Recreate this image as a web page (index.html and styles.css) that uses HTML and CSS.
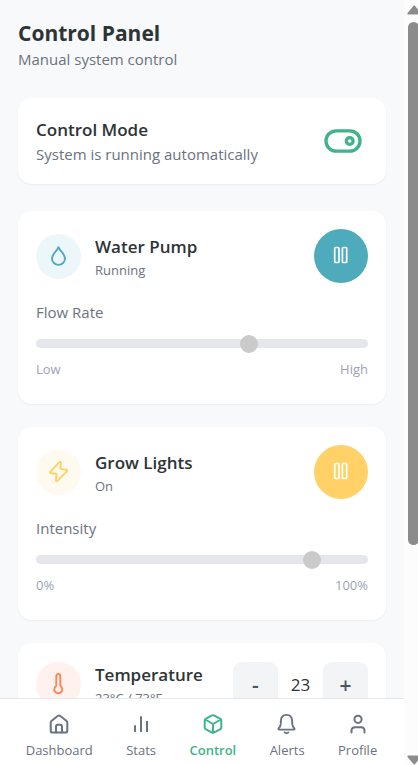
FILE: index.html
```html
<!DOCTYPE html>
<html lang="en">
<head>
<meta charset="utf-8">
<meta name="viewport" content="width=device-width, initial-scale=1">
<title>Control Panel</title>
<link rel="stylesheet" href="styles.css">
</head>
<body>
<div class="app">
  <main class="content">
    <header class="page-header">
      <h1>Control Panel</h1>
      <p class="text">Manual system control</p>
    </header>

    <section class="card mode">
      <div>
        <h2>Control Mode</h2>
        <p class="text">System is running automatically</p>
      </div>
      <button class="toggle" type="button" aria-label="Toggle automatic mode">
        <svg width="40" height="26" viewBox="0 0 40 26" fill="none" stroke="currentColor" stroke-width="3.3"><rect x="3" y="2.8" width="34" height="20.4" rx="10.2"/><circle cx="26.7" cy="13" r="3.4"/></svg>
      </button>
    </section>

    <section class="card device water">
      <div class="row">
        <span class="badge"><svg class="icon thin" viewBox="0 0 24 24"><path d="M11.500 3.200C11 6.400 5 9.100 5 14.600a6.500 6.300 0 0 0 13 0C18 9.100 12 6.400 11.500 3.200z"/></svg></span>
        <div class="info"><h2>Water Pump</h2><p class="status">Running</p></div>
        <button class="power" type="button" aria-label="Pause water pump"><svg class="icon pause" viewBox="0 0 24 24"><rect x="5.700" y="3.500" width="4.300" height="15" rx="1"/><rect x="13.400" y="3.500" width="4.300" height="15" rx="1"/></svg></button>
      </div>
      <label class="text" for="flow">Flow Rate</label>
      <input id="flow" type="range" min="0" max="100" value="65">
      <div class="scale"><span>Low</span><span>High</span></div>
    </section>

    <section class="card device lights">
      <div class="row">
        <span class="badge"><svg class="icon thin" viewBox="0 0 24 24"><path d="M12.200 2.300 3.200 11.800c-.5.700-.2 1.400.6 1.500l5.200.5c.5.100.7.400.6.900l-.8 5.500c-.1 1.100.9 1.400 1.600.7l9.500-9.700c.6-.6.300-1.400-.5-1.500l-5.300-.6c-.6-.1-.8-.4-.7-1l.5-5.200c.1-1-1-1.400-1.700-.6z"/></svg></span>
        <div class="info"><h2>Grow Lights</h2><p class="status">On</p></div>
        <button class="power" type="button" aria-label="Pause grow lights"><svg class="icon pause" viewBox="0 0 24 24"><rect x="5.700" y="3.500" width="4.300" height="15" rx="1"/><rect x="13.400" y="3.500" width="4.300" height="15" rx="1"/></svg></button>
      </div>
      <label class="text" for="intensity">Intensity</label>
      <input id="intensity" type="range" min="0" max="100" value="85">
      <div class="scale"><span>0%</span><span>100%</span></div>
    </section>

    <section class="card device heat">
      <div class="row">
        <span class="badge"><svg class="icon thin" viewBox="0 0 24 24"><path d="M9.300 12.800V3a2 2 0 0 1 4 0v9.800a4 4 0 1 1-4 0z"/></svg></span>
        <div class="info"><h2>Temperature</h2><p class="status">23°C / 73°F</p></div>
        <div class="stepper">
          <button type="button" aria-label="Decrease temperature">-</button>
          <output>23</output>
          <button type="button" aria-label="Increase temperature">+</button>
        </div>
      </div>
    </section>
  </main>

  <div class="scrollbar" aria-hidden="true">
    <svg width="14" height="22" viewBox="0 0 14 22"><path d="M3.500 14.500v-1.500L9 6.500q1-2 2.500 0L17 13v1.500z"/></svg>
    <span class="thumb"></span>
    <span class="rest"></span>
    <svg width="14" height="10" viewBox="0 0 14 10"><path d="M3.500 .5V2L9 8.500q1 2 2.500 0L17 2V.5z"/></svg>
  </div>

  <nav class="tabs">
    <a href="#dashboard"><svg class="icon" viewBox="0 0 24 24"><path d="M3.700 10.700c0-.9.400-1.500 1-2l6-4.700c.8-.6 1.800-.6 2.600 0l6 4.700c.6.500 1 1.100 1 2v8c0 1.100-.8 1.900-1.900 1.900H5.600c-1.100 0-1.900-.8-1.900-1.900z"/><path d="M9 20.600v-6c0-1.100.7-1.800 1.800-1.800h2.400c1.100 0 1.800.7 1.800 1.800v6"/></svg><span>Dashboard</span></a>
    <a href="#stats"><svg class="icon" viewBox="0 0 24 24"><path d="M6 14v5.300M12 5v14.300M18 9.800v9.500"/></svg><span>Stats</span></a>
    <a href="#control" class="active" aria-current="page"><svg class="icon" viewBox="0 0 24 24"><path d="M11.100 3.400a1.900 1.900 0 0 1 1.800 0l6.500 3.500c.6.300.9.900.9 1.500v7.200c0 .6-.3 1.200-.9 1.500l-6.500 3.500a1.900 1.900 0 0 1-1.800 0l-6.500-3.500a1.700 1.700 0 0 1-.9-1.500V8.400c0-.6.300-1.200.9-1.500zM12 12v8.800M4.200 7.500 12 12l7.800-4.500"/></svg><span>Control</span></a>
    <a href="#alerts"><svg class="icon bell" viewBox="0 0 24 24"><path d="M5.900 8.700C6.100 5.200 8.300 2.900 11.500 2.900s5.400 2.300 5.600 5.800l.2 3.500c.1 1.400.7 2.700 2 4.100.6.700.3 1.300-.5 1.300H4.200c-.8 0-1.100-.6-.5-1.300 1.300-1.400 1.900-2.700 2-4.100zM9.700 20.400c1 .9 2.600.9 3.600 0"/></svg><span>Alerts</span></a>
    <a href="#profile"><svg class="icon" viewBox="0 0 24 24"><circle cx="12" cy="7.300" r="3.600"/><path d="M5.500 20.500v-1.800c0-2 1.500-3.500 3.500-3.500h6c2 0 3.500 1.500 3.500 3.500v1.800"/></svg><span>Profile</span></a>
  </nav>
</div>
</body>
</html>
```
FILE: styles.css
```css
* { box-sizing: border-box; }
body, h1, h2, p { margin: 0; }
body {
  background: #f8f9fb;
  color: #2d3436;
  font-family: "Open Sans", "Noto Sans", sans-serif;
}
button, input, output { font: inherit; color: inherit; }
button { padding: 0; border: 0; cursor: pointer; }

.app {
  display: grid;
  grid-template-columns: minmax(0, 1fr) 14px;
  grid-template-rows: minmax(0, 1fr) auto;
  height: 100vh;
}
.content {
  overflow-y: auto;
  scrollbar-width: none;
  padding: 18px;
}
h1 { font-size: 21px; line-height: 30px; font-weight: 700; }
h2 { font-size: 17px; line-height: 27px; font-weight: 600; }
.text { font-size: 15px; line-height: 23px; color: #6b7280; }
.status { font-size: 13px; line-height: 20px; color: #6b7280; }

.page-header { margin-bottom: 27px; }
.card {
  padding: 18px;
  border-radius: 14px;
  background: #fff;
  box-shadow: 0 1px 2px rgba(0, 0, 0, .05);
}
.mode {
  display: flex;
  align-items: center;
  justify-content: space-between;
  margin-bottom: 27px;
}
.toggle { display: flex; margin-right: 5px; background: none; color: #3eb489; }
.device { margin-bottom: 23px; padding-bottom: 25px; }
.device > label { display: block; margin-top: 18px; }
.row { display: flex; align-items: center; }
.info { flex: 1; min-width: 0; margin-left: 14px; }
.badge, .power {
  display: flex;
  align-items: center;
  justify-content: center;
  flex: none;
  border-radius: 50%;
}
.badge { width: 45px; height: 45px; }
.power { width: 54px; height: 54px; color: #fff; }
.water .badge { background: #edf6f8; color: #4dabbc; }
.water .power { background: #4dabbc; }
.lights .badge { background: #fffaf0; color: #ffd166; }
.lights .power { background: #ffd166; }
.heat .badge { background: #fff1ed; color: #ff8552; }

.icon {
  display: block;
  width: 24px;
  height: 24px;
  fill: none;
  stroke: currentColor;
  stroke-width: 2;
  stroke-linecap: round;
  stroke-linejoin: round;
}
.thin, .bell { stroke-width: 1.9; }
.pause { stroke-width: 1.7; }

input[type="range"] {
  display: block;
  appearance: none;
  width: 100%;
  height: 9px;
  margin: 15px 0 11px;
  border-radius: 5px;
  background: #e5e7eb;
}
input[type="range"]::-webkit-slider-thumb {
  appearance: none;
  width: 18px;
  height: 18px;
  border-radius: 50%;
  background: #cacaca;
}
.scale {
  display: flex;
  justify-content: space-between;
  font-size: 13px;
  line-height: 20px;
  color: #9ca3af;
}

.stepper { display: flex; align-items: center; }
.stepper button {
  width: 45px;
  height: 45px;
  border-radius: 9px;
  background: #f3f4f6;
  color: #4b5563;
  font-size: 21px;
  font-weight: 600;
}
.stepper output { width: 45px; text-align: center; font-size: 17px; }

.tabs {
  display: flex;
  justify-content: space-around;
  padding: 13px 10px 5px 9px;
  border-top: 1px solid #e5e7eb;
  background: #fff;
}
.tabs a {
  display: flex;
  flex-direction: column;
  align-items: center;
  gap: 4px;
  color: #6b7280;
  font-size: 13px;
  line-height: 20px;
  text-decoration: none;
}
.tabs .active { color: #3eb489; font-weight: 600; }

.scrollbar {
  grid-column: 2;
  grid-row: 1 / 3;
  display: flex;
  flex-direction: column;
  overflow: hidden;
  background: #fcfcfc;
}
.scrollbar svg { flex: none; fill: #8b8b8b; }
.thumb { flex: 523; width: 11px; margin-left: 4px; border-radius: 6px; background: #8b8b8b; }
.rest { flex: 210; }
.tabs { grid-column: 1; grid-row: 2; }
```
